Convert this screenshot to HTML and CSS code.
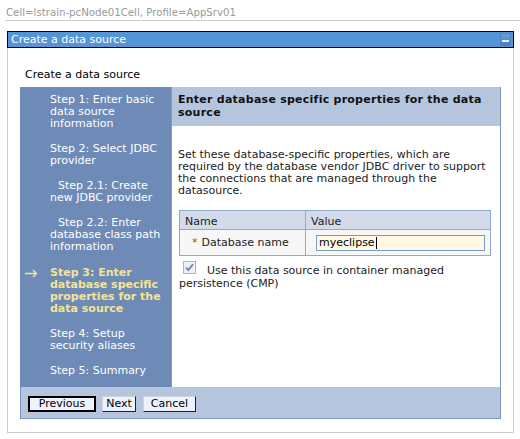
FILE: index.html
```html
<!DOCTYPE html>
<html>
<head>
<meta charset="utf-8">
<link rel="stylesheet" href="styles.css">
</head>
<body>
<div class="crumb">Cell=lstrain-pcNode01Cell, Profile=AppSrv01</div>
<div class="frame">
  <div class="titlebar">
    <span class="title">Create a data source</span>
    <span class="min"><span class="dash"></span></span>
  </div>
  <div class="frame-body">
    <div class="heading">Create a data source</div>
    <div class="wizard">
      <div class="nav">
        <div class="step">Step 1: Enter basic<br>data source<br>information</div>
        <div class="step">Step 2: Select JDBC<br>provider</div>
        <div class="step sub">Step 2.1: Create<br>new JDBC provider</div>
        <div class="step sub">Step 2.2: Enter<br>database class path<br>information</div>
        <div class="step current">
          <span class="arrow"><svg width="13" height="9" viewBox="0 0 13 9"><path d="M0 4.5H11.5M8 1L11.5 4.5L8 8" fill="none" stroke="#f3e69a" stroke-width="1.4"/></svg></span>
          <span>Step 3: Enter<br>database specific<br>properties for the<br>data source</span>
        </div>
        <div class="step">Step 4: Setup<br>security aliases</div>
        <div class="step">Step 5: Summary</div>
      </div>
      <div class="main">
        <div class="main-head">Enter database specific properties for the data<br>source</div>
        <div class="main-body">
          <p class="desc">Set these database-specific properties, which are<br>required by the database vendor JDBC driver to support<br>the connections that are managed through the<br>datasource.</p>
          <table class="props">
            <tr class="hrow"><th class="c1">Name</th><th class="c2">Value</th></tr>
            <tr class="brow">
              <td class="c1"><span class="req">*</span>Database name</td>
              <td class="c2"><span class="input">myeclipse<span class="caret"></span></span></td>
            </tr>
          </table>
          <div class="cmp">
            <div class="cmp-line"><span class="cb"><svg width="11" height="11" viewBox="0 0 11 11"><path d="M2 5.5L4.3 8L9 2.2" fill="none" stroke="#6f7fae" stroke-width="1.8"/></svg></span><span class="cmp-t1">Use this data source in container managed</span></div>
            <div class="cmp-t2">persistence (CMP)</div>
          </div>
        </div>
      </div>
      <div class="footer">
        <span class="btn default">Previous</span>
        <span class="btn">Next</span>
        <span class="btn">Cancel</span>
      </div>
    </div>
  </div>
</div>
</body>
</html>
```
FILE: styles.css
```css
body {
  margin: 0;
  font-family: "DejaVu Sans", Verdana, sans-serif;
  font-size: 11px;
  color: #000;
  background: #fff;
}
.crumb {
  margin-left: 5px;
  padding: 6px 0 0 1px;
  height: 14px;
  line-height: 13px;
  font-size: 10.2px;
  color: #9a9a9a;
  border-bottom: 1px solid #cccccc;
}
.frame {
  margin: 10px 0 0 7px;
  width: 507px;
}
.titlebar {
  box-sizing: border-box;
  height: 17px;
  border: 1px solid #000;
  background: #5395d5;
  color: #fff;
  display: flex;
  align-items: center;
  justify-content: space-between;
  padding: 0 2px 0 3px;
}
.title { line-height: 13px; }
.min {
  box-sizing: border-box;
  width: 11px;
  height: 13px;
  background: linear-gradient(#6aa3dc, #3f7fc2);
  border: 1px solid #4a86c6;
  display: flex;
  align-items: flex-end;
  justify-content: center;
  padding-bottom: 3px;
}
.dash {
  width: 7px;
  height: 2px;
  background: #e8f0fa;
}
.frame-body {
  box-sizing: border-box;
  width: 507px;
  border: 1px solid #cccccc;
  border-top: none;
  padding: 21px 0 13px 12px;
}
.heading {
  padding-left: 5px;
  line-height: 12px;
  margin-bottom: 6px;
}
.wizard {
  display: grid;
  grid-template-columns: 151px 330px;
  grid-template-rows: 300px 32px;
  width: 481px;
}
.nav {
  background: #6e8bb7;
  color: #fff;
  padding: 7px 2px 0 30px;
  line-height: 12px;
  white-space: nowrap;
}
.step { margin-bottom: 13px; }
.step.sub { text-indent: 8px; }
.step.current {
  display: flex;
  margin-top: 14px;
  margin-left: -25px;
  color: #f3e496;
  font-weight: bold;
}
.arrow {
  width: 25px;
  flex: none;
  padding-top: 2px;
}
.arrow svg { display: block; }
.main {
  border-left: 1px solid #7a97c2;
  border-right: 1px solid #7a97c2;
  background: #fff;
}
.main-head {
  background: #b5c5de;
  font-weight: bold;
  line-height: 13px;
  letter-spacing: 0.25px;
  padding: 6px 2px 7px 6px;
  color: #111;
  white-space: nowrap;
}
.main-body {
  padding: 23px 2px 0 6px;
  color: #222;
}
.desc {
  margin: 0 0 13px 0;
  line-height: 12px;
  white-space: nowrap;
}
.props {
  margin-left: 1px;
  width: 312px;
  border-collapse: collapse;
  border: 1px solid #8faad6;
}
.props th, .props td {
  border: 1px solid #8faad6;
  padding: 0 5px;
  text-align: left;
  font-weight: normal;
}
.props th { padding-top: 2px; }
.props .c1 { width: 117px; }
.hrow { background: #d3daea; height: 19px; }
.brow { background: #f7f7f7; height: 26px; }
.brow .c1 { padding-left: 12px; }
.req { color: #7a6a00; margin-right: 4px; }
.brow .c2 { padding-left: 10px; }
.input {
  box-sizing: border-box;
  display: flex;
  align-items: center;
  width: 169px;
  height: 16px;
  border: 1px solid #7b9ccb;
  background: #fff9e4;
  padding-left: 2px;
  color: #000;
}
.caret {
  width: 1px;
  height: 12px;
  background: #000;
  margin-left: 1px;
}
.cmp {
  margin-top: 5px;
  margin-left: 2px;
  line-height: 13px;
  color: #222;
}
.cmp-line {
  display: flex;
  align-items: flex-start;
}
.cmp-t1 { padding-top: 3px; }
.cmp-t2 { margin-left: -1px; }
.cb {
  box-sizing: border-box;
  flex: none;
  width: 13px;
  height: 13px;
  border: 1px solid #b4b4b4;
  background: #eef0f4;
  margin: 0 11px 0 3px;
}
.cb svg { display: block; }
.footer {
  grid-column: 1 / 3;
  background: #b5c5de;
  border: 1px solid #7a97c2;
  border-top: none;
  display: flex;
  align-items: flex-start;
  padding: 9px 0 0 7px;
  gap: 6px;
}
.btn {
  box-sizing: border-box;
  height: 16px;
  line-height: 13px;
  padding: 0 2px;
  background: #eef2fc;
  border: 1px solid;
  border-color: #d0d4dc #202020 #202020 #d0d4dc;
  color: #000;
  text-align: center;
}
.btn.default {
  width: 68px;
  border: 2px solid #000;
  line-height: 12px;
}
.btn:nth-child(2) { width: 34px; }
.btn:nth-child(3) { width: 53px; margin-left: 1px; }
```
